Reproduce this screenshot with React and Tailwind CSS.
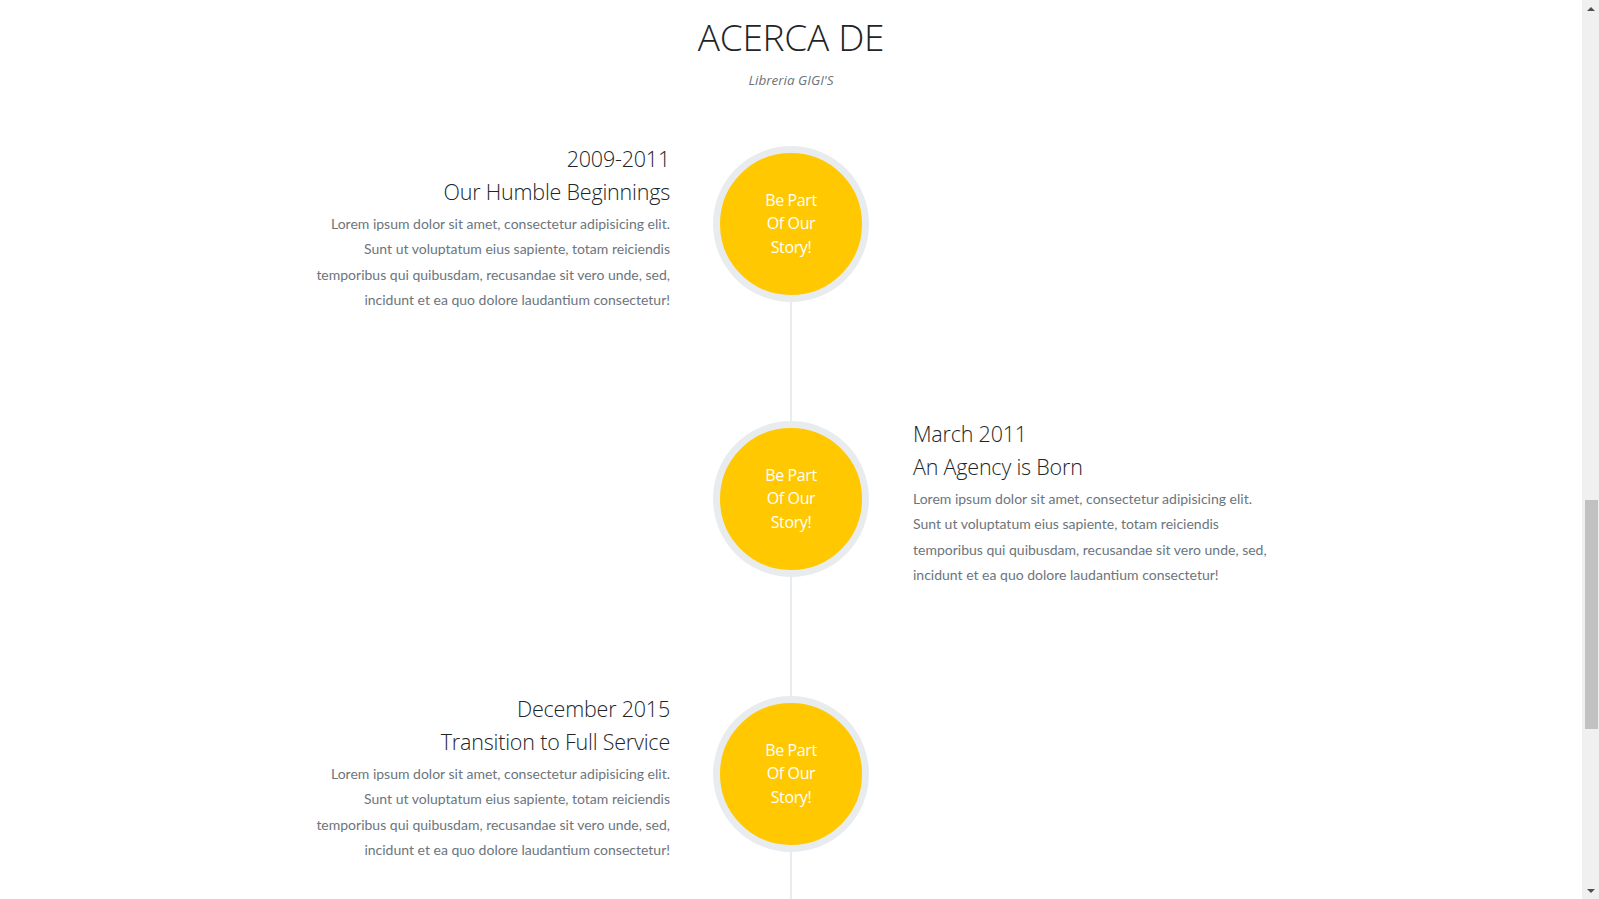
const items = [
  {
    side: "left",
    date: "2009-2011",
    title: "Our Humble Beginnings",
  },
  {
    side: "right",
    date: "March 2011",
    title: "An Agency is Born",
  },
  {
    side: "left",
    date: "December 2015",
    title: "Transition to Full Service",
  },
];

const lines = [
  "Lorem ipsum dolor sit amet, consectetur adipisicing elit.",
  "Sunt ut voluptatum eius sapiente, totam reiciendis",
  "temporibus qui quibusdam, recusandae sit vero unde, sed,",
  "incidunt et ea quo dolore laudantium consectetur!",
];

function Panel({ item, align }) {
  return (
    <div className={align === "right" ? "text-right -mt-[4px]" : "text-left -mt-[4px]"}>
      <h4 className="font-['Open_Sans',sans-serif] font-light text-[21.5px] leading-[33px] text-[#212529] tracking-[-0.2px]">
        {item.date}
      </h4>
      <h4 className="font-['Open_Sans',sans-serif] font-light text-[21.5px] leading-[33px] text-[#212529] tracking-[-0.2px]">
        {item.title}
      </h4>
      <p className="mt-[3px] font-['Lato',sans-serif] text-[14px] leading-[25.3px] text-[#6c757d]">
        {lines.map((l) => (
          <span key={l} className="block">
            {l}
          </span>
        ))}
      </p>
    </div>
  );
}

function Circle() {
  return (
    <div className="w-[156px] h-[156px] shrink-0 rounded-full border-[7px] border-[#e9ecef] bg-[#ffc800] flex items-center justify-center">
      <p className="text-center text-white text-[16px] leading-[23.5px] font-['Open_Sans',sans-serif] tracking-[-0.4px]">
        Be Part
        <br />
        Of Our
        <br />
        Story!
      </p>
    </div>
  );
}

function Scrollbar() {
  return (
    <div className="w-[17px] h-full bg-[#f0f0f0] flex flex-col items-center pl-[1px]">
      <div className="h-[17px] flex items-center justify-center">
        <div className="w-0 h-0 border-l-[4px] border-r-[4px] border-b-[4px] border-l-transparent border-r-transparent border-b-[#505050]" />
      </div>
      <div className="flex-1 w-full flex flex-col">
        <div className="h-[483px]" />
        <div className="h-[229px] w-[13px] mx-auto bg-[#c1c1c1]" />
      </div>
      <div className="h-[17px] flex items-center justify-center">
        <div className="w-0 h-0 border-l-[4px] border-r-[4px] border-t-[4px] border-l-transparent border-r-transparent border-t-[#505050]" />
      </div>
    </div>
  );
}

export default function App() {
  return (
    <div className="flex w-full h-screen overflow-hidden bg-white">
      <main className="flex-1 overflow-hidden">
        <div className="h-[146px] text-center pt-[14px]">
          <h2 className="font-['Open_Sans',sans-serif] font-light text-[37px] leading-[46px] text-[#212529] uppercase tracking-[-0.3px]">
            Acerca de
          </h2>
          <h3 className="mt-[10px] font-['Open_Sans',sans-serif] italic text-[13.5px] leading-[20px] text-[#6c757d]">
            Libreria GIGI'S
          </h3>
        </div>
        <div className="flex flex-col">
          {items.map((item, i) => (
            <div key={i} className="grid grid-cols-[1fr_156px_1fr] h-[275px]">
              <div className="flex justify-end pr-[43px]">
                {item.side === "left" && <Panel item={item} align="right" />}
              </div>
              <div className="flex flex-col items-center">
                <Circle />
                <div className="flex-1 w-[2px] bg-[#e9ecef]" />
              </div>
              <div className="flex justify-start pl-[44px]">
                {item.side === "right" && <Panel item={item} align="left" />}
              </div>
            </div>
          ))}
        </div>
      </main>
      <Scrollbar />
    </div>
  );
}
